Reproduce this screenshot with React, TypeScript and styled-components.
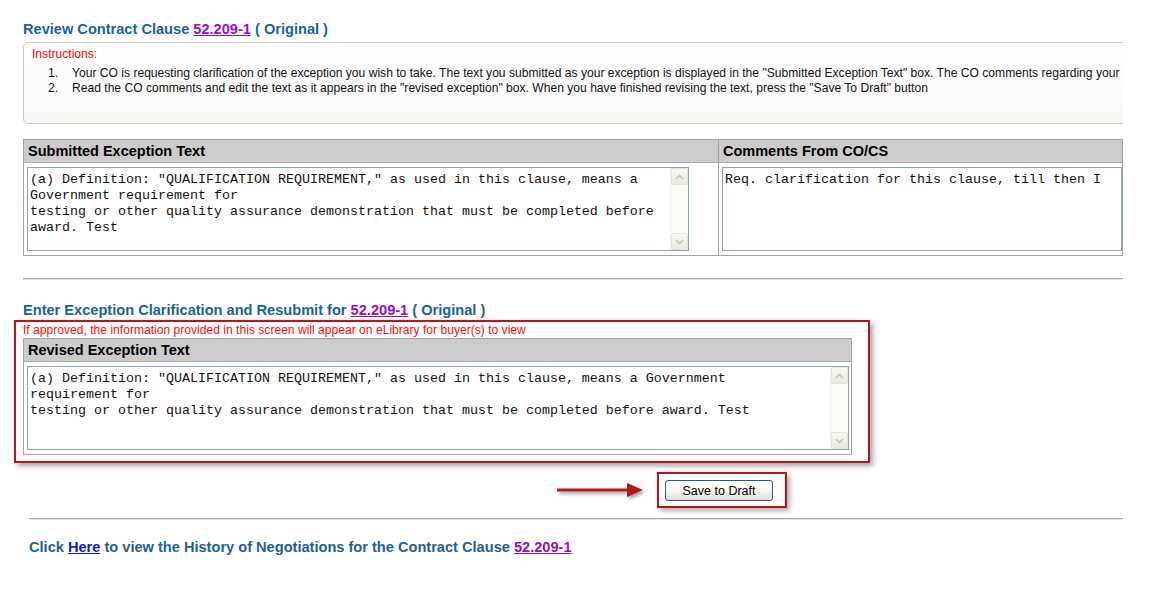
import React from 'react';
import styled, { createGlobalStyle } from 'styled-components';

const GlobalStyle = createGlobalStyle`
  html, body { margin: 0; padding: 0; background: #ffffff; }
  body { font-family: "Liberation Sans", Arial, sans-serif; color: #000; }
`;

const Page = styled.div`
  width: 1100px;
  padding: 21px 0 40px 23px;
  overflow: hidden;
`;

const Heading = styled.h2`
  margin: 0;
  font-size: 14.6px;
  line-height: 17px;
  font-weight: bold;
  color: #17649a;
  white-space: nowrap;
`;

const ClauseLink = styled.a`
  color: #9110c6;
  text-decoration: underline;
  cursor: pointer;
`;

const HereLink = styled.a`
  color: #0a1fd0;
  text-decoration: underline;
  cursor: pointer;
`;

const InstructionsBox = styled.div`
  box-sizing: border-box;
  margin-top: 4px;
  width: 1140px;
  height: 82px;
  padding: 4px 0 0 8px;
  border: 1px solid #cfccbd;
  border-radius: 5px;
  background: linear-gradient(#ffffff, #f8f8f7);
  font-size: 12.1px;
`;

const InstructionsLabel = styled.div`
  color: #ff0000;
  line-height: 14px;
`;

const StepList = styled.div`
  margin-top: 5px;
  display: flex;
  flex-direction: column;
`;

const Step = styled.div`
  display: grid;
  grid-template-columns: 26px 1fr;
  column-gap: 14px;
  line-height: 15px;
  white-space: nowrap;
  color: #111;
`;

const StepNum = styled.span`
  text-align: right;
`;

const ExceptionTable = styled.div<{ $width: number; $cols: string }>`
  box-sizing: border-box;
  width: ${(p) => p.$width}px;
  display: grid;
  grid-template-columns: ${(p) => p.$cols};
  border: 1px solid #a2a2a2;
  background: #fff;
`;

const SpacedTable = styled.div`
  margin-top: 15px;
`;

const HeaderCell = styled.div<{ $divider?: boolean }>`
  height: 22px;
  padding-left: 4px;
  background: #cccccc;
  border-bottom: 1px solid #a8a8a8;
  border-right: ${(p) => (p.$divider ? '1px solid #a2a2a2' : '0')};
  font-size: 14.5px;
  font-weight: bold;
  line-height: 23px;
  color: #000;
  white-space: nowrap;
`;

const BodyCell = styled.div<{ $divider?: boolean }>`
  padding: 4px 0 4px 3px;
  border-right: ${(p) => (p.$divider ? '1px solid #a2a2a2' : '0')};
`;

const TextBox = styled.div<{ $width?: number }>`
  box-sizing: border-box;
  display: flex;
  width: ${(p) => (p.$width ? `${p.$width}px` : '100%')};
  height: 84px;
  border: 1px solid #8aa3bd;
  background: #fff;
`;

const TextArea = styled.textarea`
  flex: 1;
  min-width: 0;
  margin: 0;
  padding: 4px 10px 2px 2px;
  border: 0;
  outline: none;
  resize: none;
  overflow: hidden;
  background: transparent;
  font-family: "Liberation Mono", "Courier New", monospace;
  font-size: 13.33px;
  line-height: 16px;
  color: #111;
`;

const ScrollTrack = styled.div`
  width: 17px;
  display: flex;
  flex-direction: column;
  justify-content: space-between;
  background: #fbfbf8;
  border-left: 1px solid #f2f1ea;
`;

const ScrollButton = styled.div`
  box-sizing: border-box;
  height: 17px;
  display: flex;
  align-items: center;
  justify-content: center;
  border: 1px solid #e6e5db;
  border-radius: 2px;
  background: linear-gradient(#f8f8f3, #ebeae1);
`;

const Rule = styled.div<{ $indent?: number }>`
  margin-left: ${(p) => p.$indent ?? 0}px;
  height: 1px;
  background: #aca899;
  border-bottom: 1px solid #e4e2d8;
`;

const TopRule = styled(Rule)`
  margin-top: 22px;
`;

const SectionHeading = styled(Heading)`
  margin-top: 22px;
`;

const Callout = styled.div`
  box-sizing: border-box;
  width: 856px;
  margin: 1px 0 0 -9px;
  padding: 1px 16px 6px 7px;
  border: 2px solid #c0101a;
  box-shadow: 3px 3px 5px rgba(0, 0, 0, 0.35);
`;

const Notice = styled.div`
  font-size: 12.1px;
  line-height: 15px;
  color: #ff0a0a;
  white-space: nowrap;
`;

const ActionRow = styled.div`
  display: flex;
  align-items: center;
  gap: 8px;
  margin: 9px 0 0 534px;
`;

const ButtonFrame = styled.div`
  padding: 6px 12px 5px 6px;
  border: 2px solid #c0101a;
  box-shadow: 3px 3px 5px rgba(0, 0, 0, 0.3);
`;

const DraftButton = styled.button`
  display: block;
  width: 108px;
  height: 21px;
  padding: 0;
  border: 1px solid #2f5a80;
  border-radius: 3px;
  background: linear-gradient(#ffffff, #f5f5f1 55%, #dedcd2);
  font-family: "Liberation Sans", Arial, sans-serif;
  font-size: 12.5px;
  color: #000;
`;

const BottomRule = styled(Rule)`
  margin-top: 10px;
`;

const FooterLine = styled(Heading)`
  margin: 19px 0 0 6px;
`;

const Chevron = ({ up }: { up?: boolean }) => (
  <svg width="9" height="6" viewBox="0 0 9 6">
    <polyline
      points={up ? '1,5 4.5,1.5 8,5' : '1,1 4.5,4.5 8,1'}
      fill="none"
      stroke="#c6c5ba"
      strokeWidth="1.6"
    />
  </svg>
);

const ScrollBar = () => (
  <ScrollTrack>
    <ScrollButton>
      <Chevron up />
    </ScrollButton>
    <ScrollButton>
      <Chevron />
    </ScrollButton>
  </ScrollTrack>
);

const Arrow = () => (
  <svg width="92" height="24" viewBox="0 0 92 24">
    <defs>
      <filter id="arrowShadow" x="-10%" y="-50%" width="130%" height="220%">
        <feDropShadow dx="2" dy="2.5" stdDeviation="1.5" floodColor="#000" floodOpacity="0.35" />
      </filter>
    </defs>
    <g filter="url(#arrowShadow)">
      <rect x="0" y="10.5" width="72" height="3" fill="#b3121b" />
      <polygon points="70,5 86,12 70,19" fill="#b3121b" />
    </g>
  </svg>
);

const exceptionText =
  '(a) Definition: "QUALIFICATION REQUIREMENT," as used in this clause, means a Government requirement for\ntesting or other quality assurance demonstration that must be completed before award. Test';

export default function App() {
  return (
    <>
      <GlobalStyle />
      <Page>
        <Heading>
          Review Contract Clause <ClauseLink>52.209-1</ClauseLink> ( Original )
        </Heading>

        <InstructionsBox>
          <InstructionsLabel>Instructions:</InstructionsLabel>
          <StepList>
            <Step>
              <StepNum>1.</StepNum>
              <span>
                Your CO is requesting clarification of the exception you wish to take. The text you submitted as your
                exception is displayed in the "Submitted Exception Text" box. The CO comments regarding your exception
                are displayed in the "Comments From CO/CS" box.
              </span>
            </Step>
            <Step>
              <StepNum>2.</StepNum>
              <span>
                Read the CO comments and edit the text as it appears in the "revised exception" box. When you have
                finished revising the text, press the "Save To Draft" button
              </span>
            </Step>
          </StepList>
        </InstructionsBox>

        <SpacedTable>
          <ExceptionTable $width={1100} $cols="695px 1fr">
            <HeaderCell $divider>Submitted Exception Text</HeaderCell>
            <HeaderCell>Comments From CO/CS</HeaderCell>
            <BodyCell $divider>
              <TextBox $width={662}>
                <TextArea readOnly defaultValue={exceptionText} />
                <ScrollBar />
              </TextBox>
            </BodyCell>
            <BodyCell>
              <TextBox>
                <TextArea readOnly defaultValue="Req. clarification for this clause, till then I" />
              </TextBox>
            </BodyCell>
          </ExceptionTable>
        </SpacedTable>

        <TopRule />

        <SectionHeading>
          Enter Exception Clarification and Resubmit for <ClauseLink>52.209-1</ClauseLink> ( Original )
        </SectionHeading>

        <Callout>
          <Notice>
            If approved, the information provided in this screen will appear on eLibrary for buyer(s) to view
          </Notice>
          <ExceptionTable $width={829} $cols="1fr">
            <HeaderCell>Revised Exception Text</HeaderCell>
            <BodyCell>
              <TextBox $width={822}>
                <TextArea defaultValue={exceptionText} />
                <ScrollBar />
              </TextBox>
            </BodyCell>
          </ExceptionTable>
        </Callout>

        <ActionRow>
          <Arrow />
          <ButtonFrame>
            <DraftButton type="button">Save to Draft</DraftButton>
          </ButtonFrame>
        </ActionRow>

        <BottomRule $indent={6} />

        <FooterLine>
          Click <HereLink>Here</HereLink> to view the History of Negotiations for the Contract Clause{' '}
          <ClauseLink>52.209-1</ClauseLink>
        </FooterLine>
      </Page>
    </>
  );
}
